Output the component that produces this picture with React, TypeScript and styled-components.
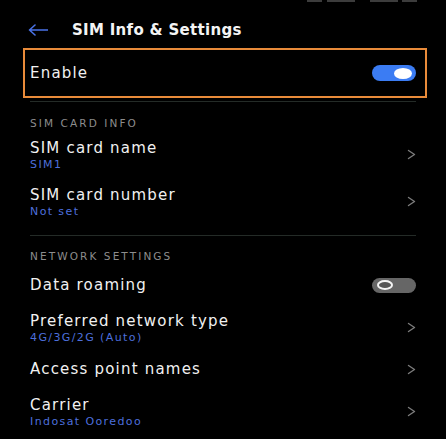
import React from "react";
import styled, { createGlobalStyle } from "styled-components";

const GlobalStyle = createGlobalStyle`
  html, body {
    margin: 0;
    padding: 0;
    background: #000;
  }
  body {
    font-family: "DejaVu Sans", "Liberation Sans", sans-serif;
    color: #f1f1f1;
  }
`;

interface IRow {
  title: string;
  value?: string;
  control?: "chevron" | "on" | "off";
}

const simRows: IRow[] = [
  { title: "SIM card name", value: "SIM1", control: "chevron" },
  { title: "SIM card number", value: "Not set", control: "chevron" },
];

const networkRows: IRow[] = [
  { title: "Data roaming", control: "off" },
  { title: "Preferred network type", value: "4G/3G/2G (Auto)", control: "chevron" },
  { title: "Access point names", control: "chevron" },
  { title: "Carrier", value: "Indosat Ooredoo", control: "chevron" },
];

const statusMarks = [
  { w: 15, ml: 0 },
  { w: 28, ml: 5 },
  { w: 28, ml: 15 },
  { w: 15, ml: 4 },
];

const Chevron = () => (
  <svg width="9" height="11" viewBox="0 0 9 11">
    <polyline
      points="1.5,1.5 7.5,5.5 1.5,9.5"
      fill="none"
      stroke="#7c7c7c"
      strokeWidth="1.4"
      strokeLinecap="round"
      strokeLinejoin="round"
    />
  </svg>
);

const BackArrow = () => (
  <svg width="20" height="12" viewBox="0 0 20 12">
    <path
      d="M19.5 6H1.5M7 1L1.5 6L7 11"
      fill="none"
      stroke="#4a72e6"
      strokeWidth="1.6"
      strokeLinecap="round"
      strokeLinejoin="round"
    />
  </svg>
);

const SettingRow = ({ row, height }: { row: IRow; height: number }) => (
  <Row $h={height}>
    <RowText>
      <RowTitle>{row.title}</RowTitle>
      {row.value && <RowValue>{row.value}</RowValue>}
    </RowText>
    {row.control === "chevron" && <Chevron />}
    {row.control === "on" && (
      <Toggle $on>
        <Knob $on />
      </Toggle>
    )}
    {row.control === "off" && (
      <Toggle $on={false}>
        <Knob $on={false} />
      </Toggle>
    )}
  </Row>
);

export default function App() {
  return (
    <Screen>
      <GlobalStyle />
      <StatusBar>
        {statusMarks.map((m, i) => (
          <StatusMark key={i} $w={m.w} $ml={m.ml} />
        ))}
      </StatusBar>
      <Header>
        <BackArrow />
        <Title>SIM Info &amp; Settings</Title>
      </Header>
      <Highlight>
        <RowTitle>Enable</RowTitle>
        <Toggle $on>
          <Knob $on />
        </Toggle>
      </Highlight>
      <Divider $top={3} />
      <Section>
        <SectionTitle $top={13}>SIM CARD INFO</SectionTitle>
        {simRows.map((r) => (
          <SettingRow key={r.title} row={r} height={47} />
        ))}
      </Section>
      <Divider $top={10} />
      <Section>
        <SectionTitle $top={12}>NETWORK SETTINGS</SectionTitle>
        {networkRows.map((r) => (
          <SettingRow key={r.title} row={r} height={42} />
        ))}
      </Section>
    </Screen>
  );
}

const Screen = styled.div`
  width: 446px;
  height: 439px;
  overflow: hidden;
  background: #000;
  display: flex;
  flex-direction: column;
`;

const StatusBar = styled.div`
  height: 11px;
  display: flex;
  align-items: flex-start;
  padding-left: 307px;
`;

const StatusMark = styled.div<{ $w: number; $ml: number }>`
  width: ${(p) => p.$w}px;
  margin-left: ${(p) => p.$ml}px;
  height: 2px;
  background: #3c3c3c;
`;

const Header = styled.div`
  height: 37px;
  display: flex;
  align-items: center;
  gap: 24px;
  padding-left: 28px;
`;

const Title = styled.h1`
  margin: 0;
  font-size: 15px;
  font-weight: 700;
  letter-spacing: 0.3px;
  color: #f4f4f4;
`;

const Highlight = styled.div`
  box-sizing: border-box;
  height: 50px;
  margin: 0 19px 0 23px;
  border: 2px solid #e98b3a;
  display: flex;
  align-items: center;
  justify-content: space-between;
  padding: 0 9px 0 5px;
`;

const Divider = styled.div<{ $top: number }>`
  height: 1px;
  margin: ${(p) => p.$top}px 30px 0;
  background: #242b27;
`;

const Section = styled.div`
  display: flex;
  flex-direction: column;
  padding: 0 30px;
`;

const SectionTitle = styled.div<{ $top: number }>`
  padding-top: ${(p) => p.$top}px;
  line-height: 16px;
  font-size: 10.5px;
  letter-spacing: 2.1px;
  color: #8d8d8d;
`;

const Row = styled.div<{ $h: number }>`
  height: ${(p) => p.$h}px;
  display: flex;
  align-items: center;
  justify-content: space-between;
`;

const RowText = styled.div`
  display: flex;
  flex-direction: column;
`;

const RowTitle = styled.span`
  font-size: 15px;
  line-height: 20px;
  letter-spacing: 1.2px;
  color: #f1f1f1;
`;

const RowValue = styled.span`
  font-size: 11px;
  line-height: 13px;
  letter-spacing: 1.4px;
  color: #4d6fdc;
`;

const Toggle = styled.div<{ $on: boolean }>`
  box-sizing: border-box;
  width: 44px;
  height: ${(p) => (p.$on ? 16 : 15)}px;
  border-radius: 8px;
  background: ${(p) => (p.$on ? "#3b7cf3" : "#666666")};
  display: flex;
  align-items: center;
  justify-content: ${(p) => (p.$on ? "flex-end" : "flex-start")};
  padding: ${(p) => (p.$on ? "0 4px 0 0" : "0 0 0 5px")};
`;

const Knob = styled.div<{ $on: boolean }>`
  box-sizing: border-box;
  width: ${(p) => (p.$on ? 18 : 16)}px;
  height: ${(p) => (p.$on ? 11 : 10)}px;
  border-radius: 50%;
  background: ${(p) => (p.$on ? "#ffffff" : "#555555")};
  border: ${(p) => (p.$on ? "none" : "2.5px solid #f4f4f4")};
`;
